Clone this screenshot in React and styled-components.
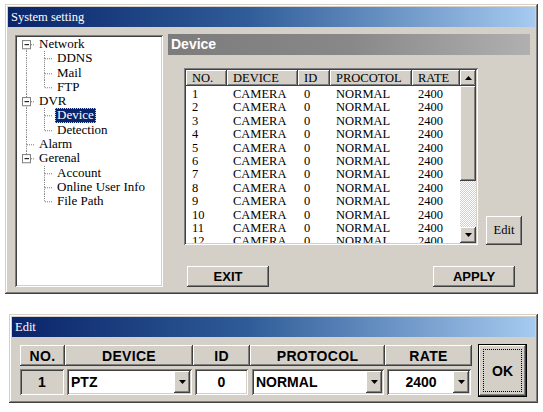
import styled, { createGlobalStyle, css } from "styled-components"

const SERIF = `"Liberation Serif", "Times New Roman", serif`
const SANS = `"Liberation Sans", Arial, sans-serif`

const GlobalStyle = createGlobalStyle`
  html, body {
    margin: 0;
    background: #fff;
  }
  * {
    box-sizing: border-box;
  }
`

const raised = css`
  background: #d4d0c8;
  box-shadow: inset -1px -1px #404040, inset 1px 1px #fff, inset -2px -2px #808080, inset 2px 2px #d4d0c8;
`

const sunken = css`
  box-shadow: inset 1px 1px #808080, inset -1px -1px #fff, inset 2px 2px #404040, inset -2px -2px #d4d0c8;
`

const treeRows = [
    { label: "Network", glyphs: ["first+"] },
    { label: "DDNS", glyphs: ["I", "T"] },
    { label: "Mail", glyphs: ["I", "T"] },
    { label: "FTP", glyphs: ["I", "L"] },
    { label: "DVR", glyphs: ["T+"] },
    { label: "Device", glyphs: ["I", "T"], selected: true },
    { label: "Detection", glyphs: ["I", "L"] },
    { label: "Alarm", glyphs: ["T"] },
    { label: "Gerenal", glyphs: ["L+"] },
    { label: "Account", glyphs: ["", "T"] },
    { label: "Online User Info", glyphs: ["", "T"] },
    { label: "File Path", glyphs: ["", "L"] },
]

const columns = [
    { key: "no", title: "NO.", width: 41 },
    { key: "device", title: "DEVICE", width: 71 },
    { key: "id", title: "ID", width: 32 },
    { key: "protocol", title: "PROCOTOL", width: 82 },
    { key: "rate", title: "RATE", width: 48 },
]

const devices = Array.from({ length: 12 }, (_, i) => ({
    no: i + 1,
    device: "CAMERA",
    id: "0",
    protocol: "NORMAL",
    rate: "2400",
}))

const TreeGlyph = ({ type }) => {
    const expander = type.endsWith("+")
    const kind = type.replace("+", "")
    const up = kind === "I" || kind === "T" || kind === "L"
    const down = kind === "I" || kind === "T" || kind === "first"
    const right = kind !== "I" && kind !== ""
    const dot = { stroke: "#808080", strokeWidth: 1, strokeDasharray: "1 1" }
    return (
        <svg width="18" height="100%" viewBox="0 0 18 14" preserveAspectRatio="none">
            {up && <line x1="9.5" y1="0" x2="9.5" y2="7" {...dot} />}
            {down && <line x1="9.5" y1="7" x2="9.5" y2="14" {...dot} />}
            {right && <line x1="10" y1="7.5" x2="18" y2="7.5" {...dot} />}
            {expander && (
                <g>
                    <rect x="5.5" y="3.5" width="8" height="8" fill="#fff" stroke="#808080" />
                    <line x1="7.5" y1="7.5" x2="12" y2="7.5" stroke="#000" />
                </g>
            )}
        </svg>
    )
}

const Arrow = ({ dir }) => (
    <svg width="7" height="4" viewBox="0 0 7 4">
        {dir === "up"
            ? <polygon points="3.5,0 7,4 0,4" fill="#000" />
            : <polygon points="0,0 7,0 3.5,4" fill="#000" />}
    </svg>
)

const App = () => {
    return (
        <Page>
            <GlobalStyle />
            <Window $width={533}>
                <TitleBar>System setting</TitleBar>
                <SettingsBody>
                    <TreeBox>
                        {treeRows.map((row) => (
                            <TreeRow key={row.label}>
                                {row.glyphs.map((g, i) => <TreeGlyph key={i} type={g} />)}
                                <TreeLabel $selected={row.selected}>{row.label}</TreeLabel>
                            </TreeRow>
                        ))}
                    </TreeBox>
                    <Pane>
                        <PaneHeader>Device</PaneHeader>
                        <ListArea>
                            <ListView>
                                <TableArea>
                                    <HeaderRow>
                                        {columns.map((c) => (
                                            <HeaderCell key={c.key} $width={c.width}>{c.title}</HeaderCell>
                                        ))}
                                    </HeaderRow>
                                    <Rows>
                                        {devices.map((d) => (
                                            <DataRow key={d.no}>
                                                {columns.map((c) => (
                                                    <DataCell key={c.key} $width={c.width}>{d[c.key]}</DataCell>
                                                ))}
                                            </DataRow>
                                        ))}
                                    </Rows>
                                </TableArea>
                                <Scrollbar>
                                    <ScrollButton><Arrow dir="up" /></ScrollButton>
                                    <Thumb />
                                    <Track />
                                    <ScrollButton><Arrow dir="down" /></ScrollButton>
                                </Scrollbar>
                            </ListView>
                            <EditButton>Edit</EditButton>
                        </ListArea>
                        <ButtonRow>
                            <PushButton>EXIT</PushButton>
                            <PushButton>APPLY</PushButton>
                        </ButtonRow>
                    </Pane>
                </SettingsBody>
            </Window>

            <Window $width={529} $offset={4} $gap={20}>
                <TitleBar>Edit</TitleBar>
                <EditBody>
                    <EditGrid>
                        <GridHead>NO.</GridHead>
                        <GridHead>DEVICE</GridHead>
                        <GridHead>ID</GridHead>
                        <GridHead>PROTOCOL</GridHead>
                        <GridHead>RATE</GridHead>

                        <NoCell>1</NoCell>
                        <Combo>
                            <ComboText>PTZ</ComboText>
                            <DropButton><Arrow dir="down" /></DropButton>
                        </Combo>
                        <Field>0</Field>
                        <Combo>
                            <ComboText>NORMAL</ComboText>
                            <DropButton><Arrow dir="down" /></DropButton>
                        </Combo>
                        <Combo>
                            <ComboText $center>2400</ComboText>
                            <DropButton><Arrow dir="down" /></DropButton>
                        </Combo>
                    </EditGrid>
                    <OkButton><FocusRing>OK</FocusRing></OkButton>
                </EditBody>
            </Window>
        </Page>
    )
}

const Page = styled.div`
    display: flex;
    flex-direction: column;
    align-items: flex-start;
    padding: 4px 0 0 5px;
`

const Window = styled.div`
    width: ${(p) => p.$width}px;
    margin-left: ${(p) => p.$offset || 0}px;
    margin-top: ${(p) => p.$gap || 0}px;
    padding: 3px;
    background: #d4d0c8;
    box-shadow: inset -1px -1px #404040, inset 1px 1px #d4d0c8, inset -2px -2px #808080, inset 2px 2px #fff;
`

const TitleBar = styled.div`
    height: 20px;
    padding-left: 3px;
    background: linear-gradient(90deg, #0a246a 0%, #2f5c98 45%, #a6caf0 100%);
    color: #fff;
    font-family: ${SERIF};
    font-size: 12.5px;
    line-height: 20px;
`

const SettingsBody = styled.div`
    display: flex;
    padding: 7px 0 4px 7px;
`

const TreeBox = styled.div`
    width: 148px;
    height: 252px;
    margin-top: 1px;
    padding: 2px 2px 2px 2px;
    background: #fff;
    ${sunken};
`

const TreeRow = styled.div`
    display: flex;
    align-items: stretch;
    height: 14.3px;
`

const TreeLabel = styled.span`
    margin-left: 2px;
    padding: 0 1px;
    font-family: ${SERIF};
    font-size: 13px;
    line-height: 12.3px;
    white-space: nowrap;
    align-self: center;
    border: 1px dotted transparent;
    ${(p) => p.$selected && css`
        background: #0a246a;
        color: #fff;
        border-color: #d8d48c;
    `}
`

const Pane = styled.div`
    width: 362px;
    margin-left: 5px;
    display: flex;
    flex-direction: column;
`

const PaneHeader = styled.div`
    height: 21px;
    padding-left: 3px;
    background: linear-gradient(90deg, #7c7c7c 0%, #888 50%, #b0b0b0 100%);
    color: #fff;
    font-family: ${SANS};
    font-weight: bold;
    font-size: 14px;
    line-height: 21px;
`

const ListArea = styled.div`
    display: flex;
    align-items: flex-end;
    gap: 8px;
    margin-top: 13px;
    padding-left: 16px;
`

const ListView = styled.div`
    display: flex;
    width: 294px;
    height: 177px;
    padding: 2px;
    background: #fff;
    ${sunken};
`

const TableArea = styled.div`
    flex: 1;
    overflow: hidden;
    font-family: ${SERIF};
    font-size: 12.5px;
`

const HeaderRow = styled.div`
    display: flex;
    height: 16px;
`

const HeaderCell = styled.div`
    width: ${(p) => p.$width}px;
    padding-left: 6px;
    line-height: 16px;
    ${raised};
`

const Rows = styled.div`
    padding-top: 2px;
`

const DataRow = styled.div`
    display: flex;
    height: 13.4px;
`

const DataCell = styled.div`
    width: ${(p) => p.$width}px;
    padding-left: 6px;
    line-height: 13.4px;
`

const Scrollbar = styled.div`
    width: 16px;
    display: flex;
    flex-direction: column;
`

const ScrollButton = styled.div`
    height: 16px;
    display: flex;
    align-items: center;
    justify-content: center;
    ${raised};
`

const Thumb = styled.div`
    height: 95px;
    ${raised};
`

const Track = styled.div`
    flex: 1;
    background: repeating-conic-gradient(#fff 0 25%, #d4d0c8 0 50%) 0 0 / 2px 2px;
`

const EditButton = styled.button`
    width: 36px;
    height: 29px;
    padding: 0;
    border: none;
    font-family: ${SERIF};
    font-size: 12.5px;
    color: #000;
    ${raised};
`

const ButtonRow = styled.div`
    display: flex;
    justify-content: space-between;
    margin-top: 21px;
    padding: 0 15px 0 19px;
`

const PushButton = styled.button`
    width: 82px;
    height: 21px;
    padding: 0;
    border: none;
    font-family: ${SANS};
    font-weight: bold;
    font-size: 13px;
    color: #000;
    ${raised};
`

const EditBody = styled.div`
    display: flex;
    align-items: flex-start;
    gap: 6px;
    padding: 8px 0 3px 8px;
`

const EditGrid = styled.div`
    display: grid;
    grid-template-columns: 45px 128px 57px 135px 87px;
    grid-template-rows: 21px 26px;
    row-gap: 3px;
    font-family: ${SANS};
    font-weight: bold;
    font-size: 14px;
`

const GridHead = styled.div`
    display: flex;
    align-items: center;
    justify-content: center;
    letter-spacing: 0.3px;
    ${raised};
`

const NoCell = styled.div`
    display: flex;
    align-items: center;
    justify-content: center;
    margin: 0 1px 0 0;
    background: #d4d0c8;
    ${sunken};
`

const Field = styled.div`
    display: flex;
    align-items: center;
    justify-content: center;
    margin: 0 2px;
    background: #fff;
    ${sunken};
`

const Combo = styled.div`
    display: flex;
    align-items: stretch;
    margin: 0 1px 0 2px;
    padding: 2px;
    background: #fff;
    ${sunken};
`

const ComboText = styled.span`
    flex: 1;
    display: flex;
    align-items: center;
    justify-content: ${(p) => (p.$center ? "center" : "flex-start")};
    padding-left: ${(p) => (p.$center ? "0" : "2px")};
`

const DropButton = styled.div`
    width: 16px;
    display: flex;
    align-items: center;
    justify-content: center;
    ${raised};
`

const OkButton = styled.button`
    width: 49px;
    height: 53px;
    margin-top: -1px;
    padding: 4px;
    border: 1px solid #000;
    font-family: ${SANS};
    font-weight: bold;
    font-size: 14px;
    color: #000;
    ${raised};
`

const FocusRing = styled.div`
    height: 100%;
    display: flex;
    align-items: center;
    justify-content: center;
    border: 1px dotted #000;
`

export default App
